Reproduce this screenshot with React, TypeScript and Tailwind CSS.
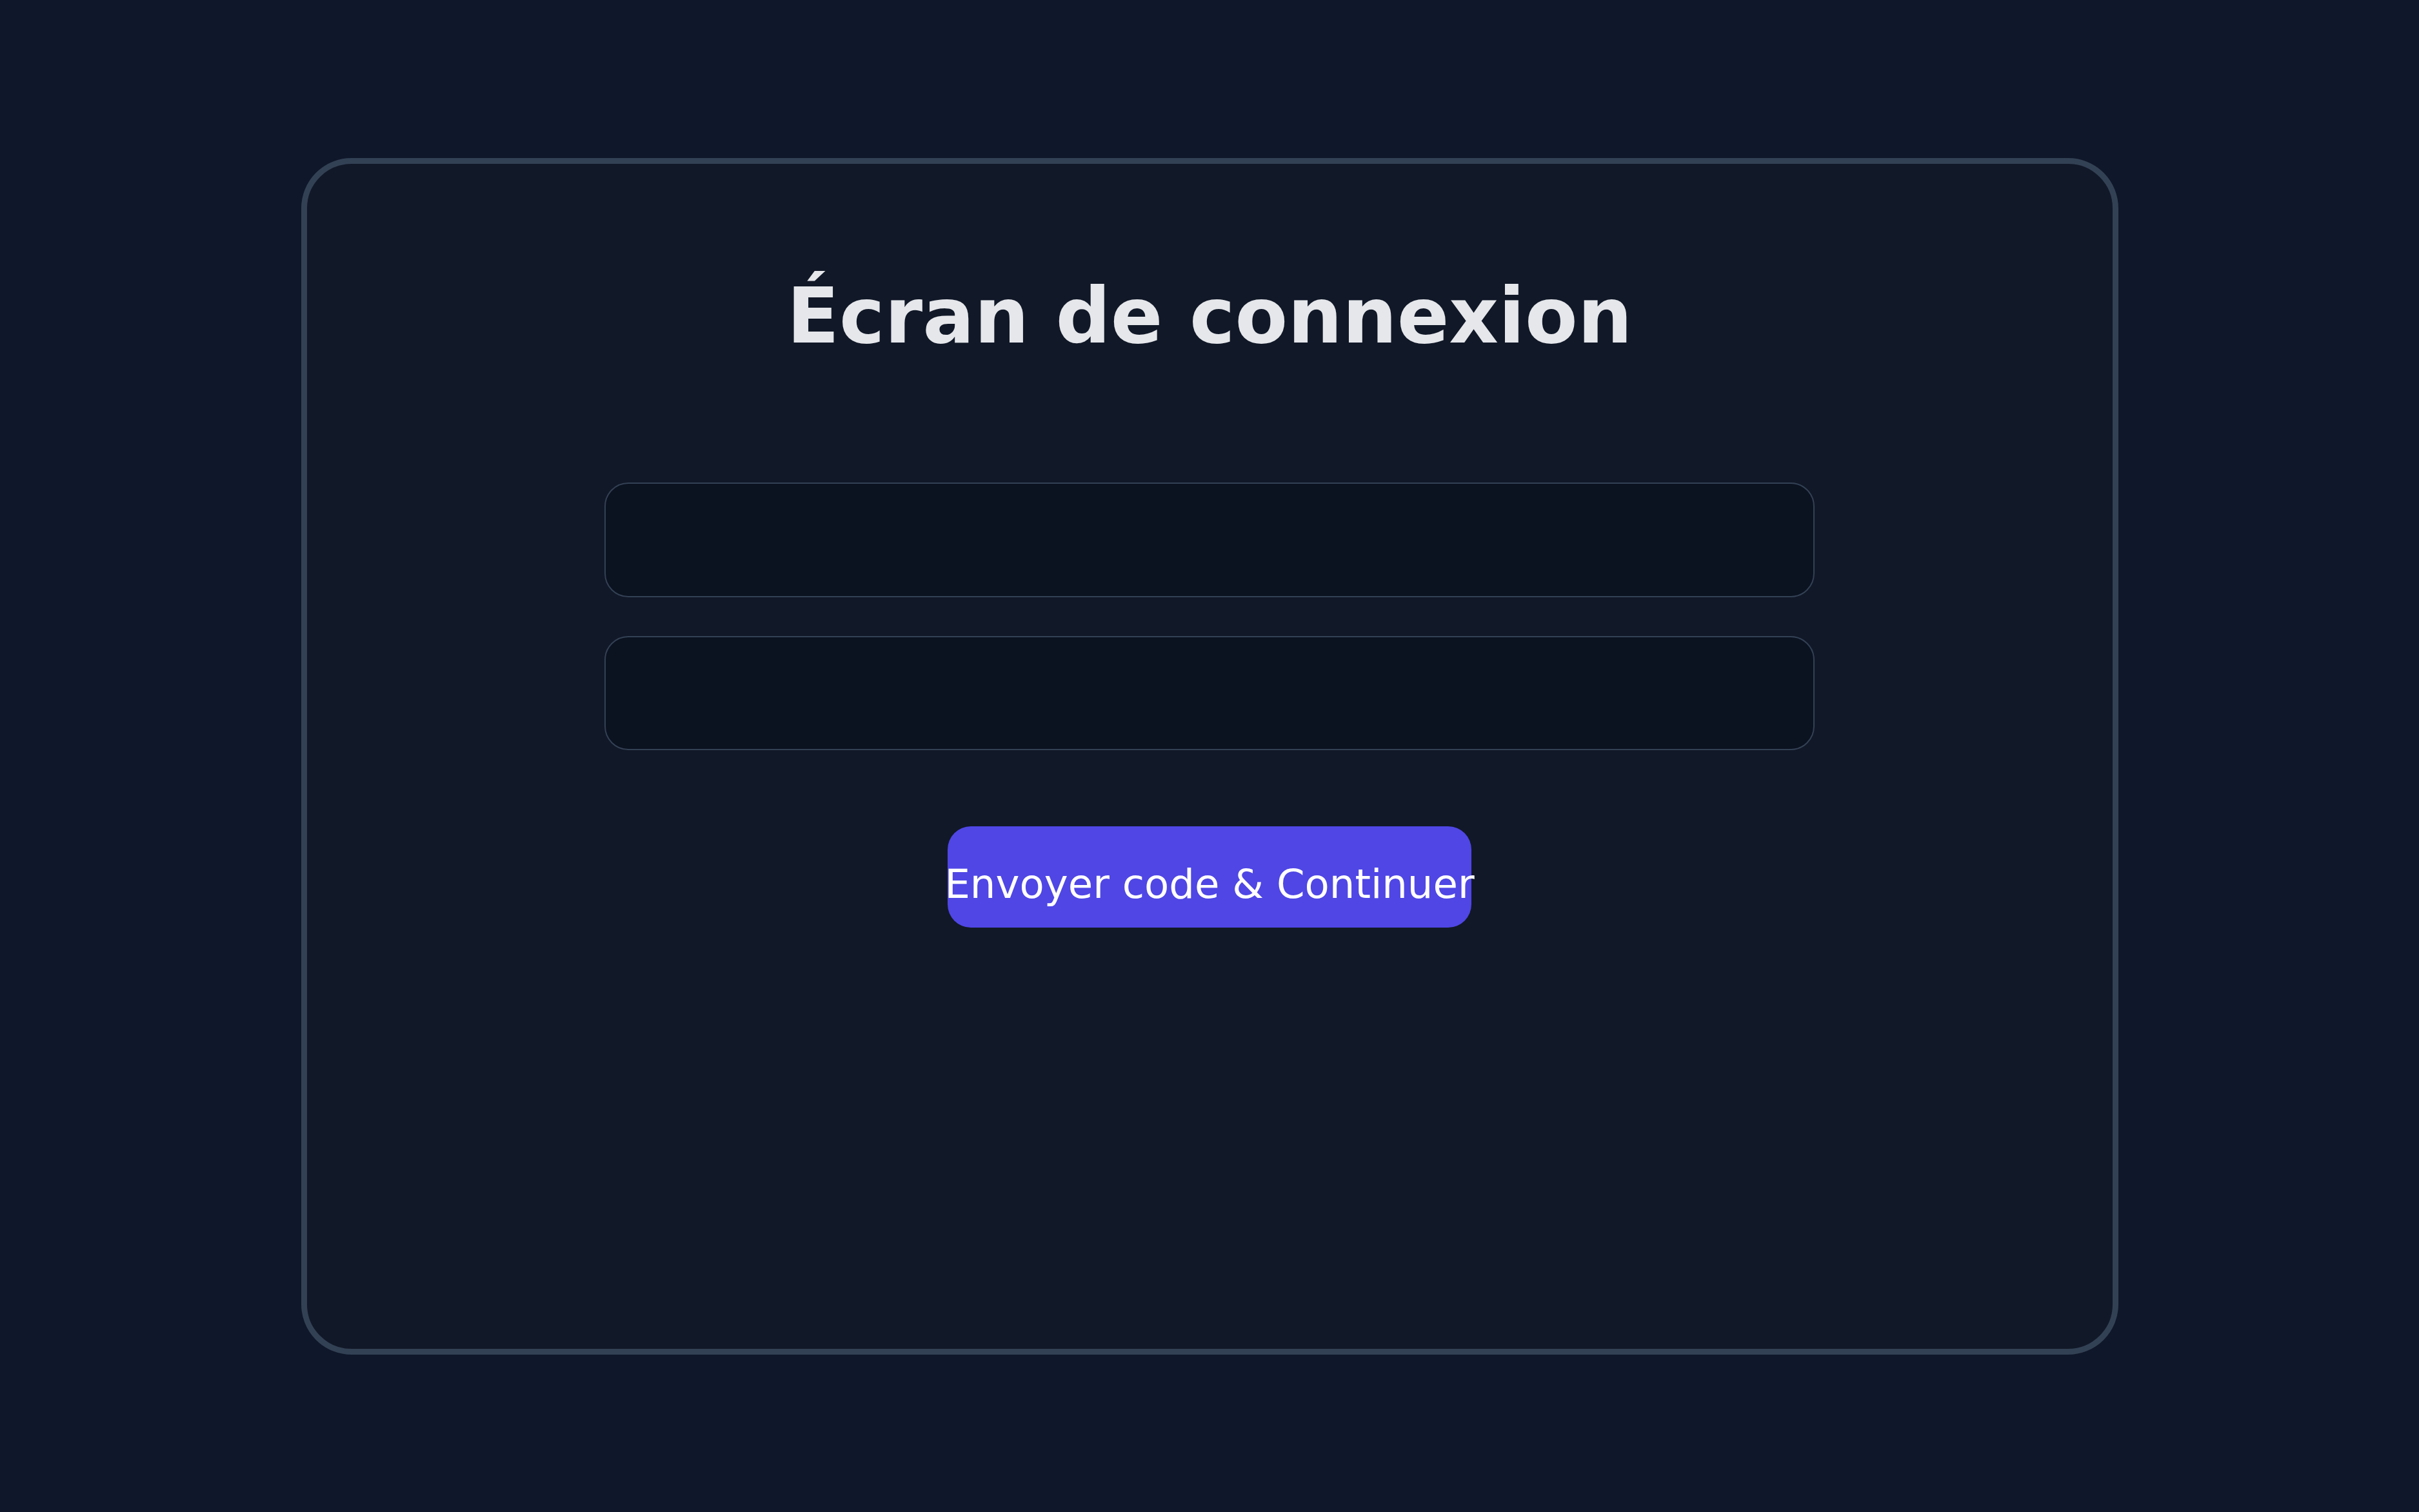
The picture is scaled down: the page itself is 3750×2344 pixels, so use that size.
export default function App() {
  return (
    <div className="min-h-screen w-full bg-[#0f172a] pt-[245px] font-['DejaVu_Sans',sans-serif]">
      {/* login card */}
      <div className="mx-auto flex h-[1855px] w-[2817px] flex-col items-center rounded-[78px] border-[9px] border-[#334155] bg-[#111827] pt-[166px]">
        <h1 className="text-[119px] font-bold leading-[140px] text-[#e5e7eb]">
          Écran de connexion
        </h1>

        <input
          type="text"
          aria-label="Identifiant"
          className="mt-[188px] h-[178px] w-[1876px] rounded-[37px] border-2 border-[#334155] bg-[#0b1220] outline-none"
        />
        <input
          type="password"
          aria-label="Mot de passe"
          className="mt-[60px] h-[177px] w-[1876px] rounded-[37px] border-2 border-[#334155] bg-[#0b1220] outline-none"
        />

        <button
          type="button"
          className="mt-[118px] flex h-[157px] w-[812px] items-center justify-center whitespace-nowrap rounded-[36px] bg-[#4f46e5] pt-[22px] text-[62.5px] text-white"
        >
          Envoyer code &amp; Continuer
        </button>
      </div>
    </div>
  );
}
